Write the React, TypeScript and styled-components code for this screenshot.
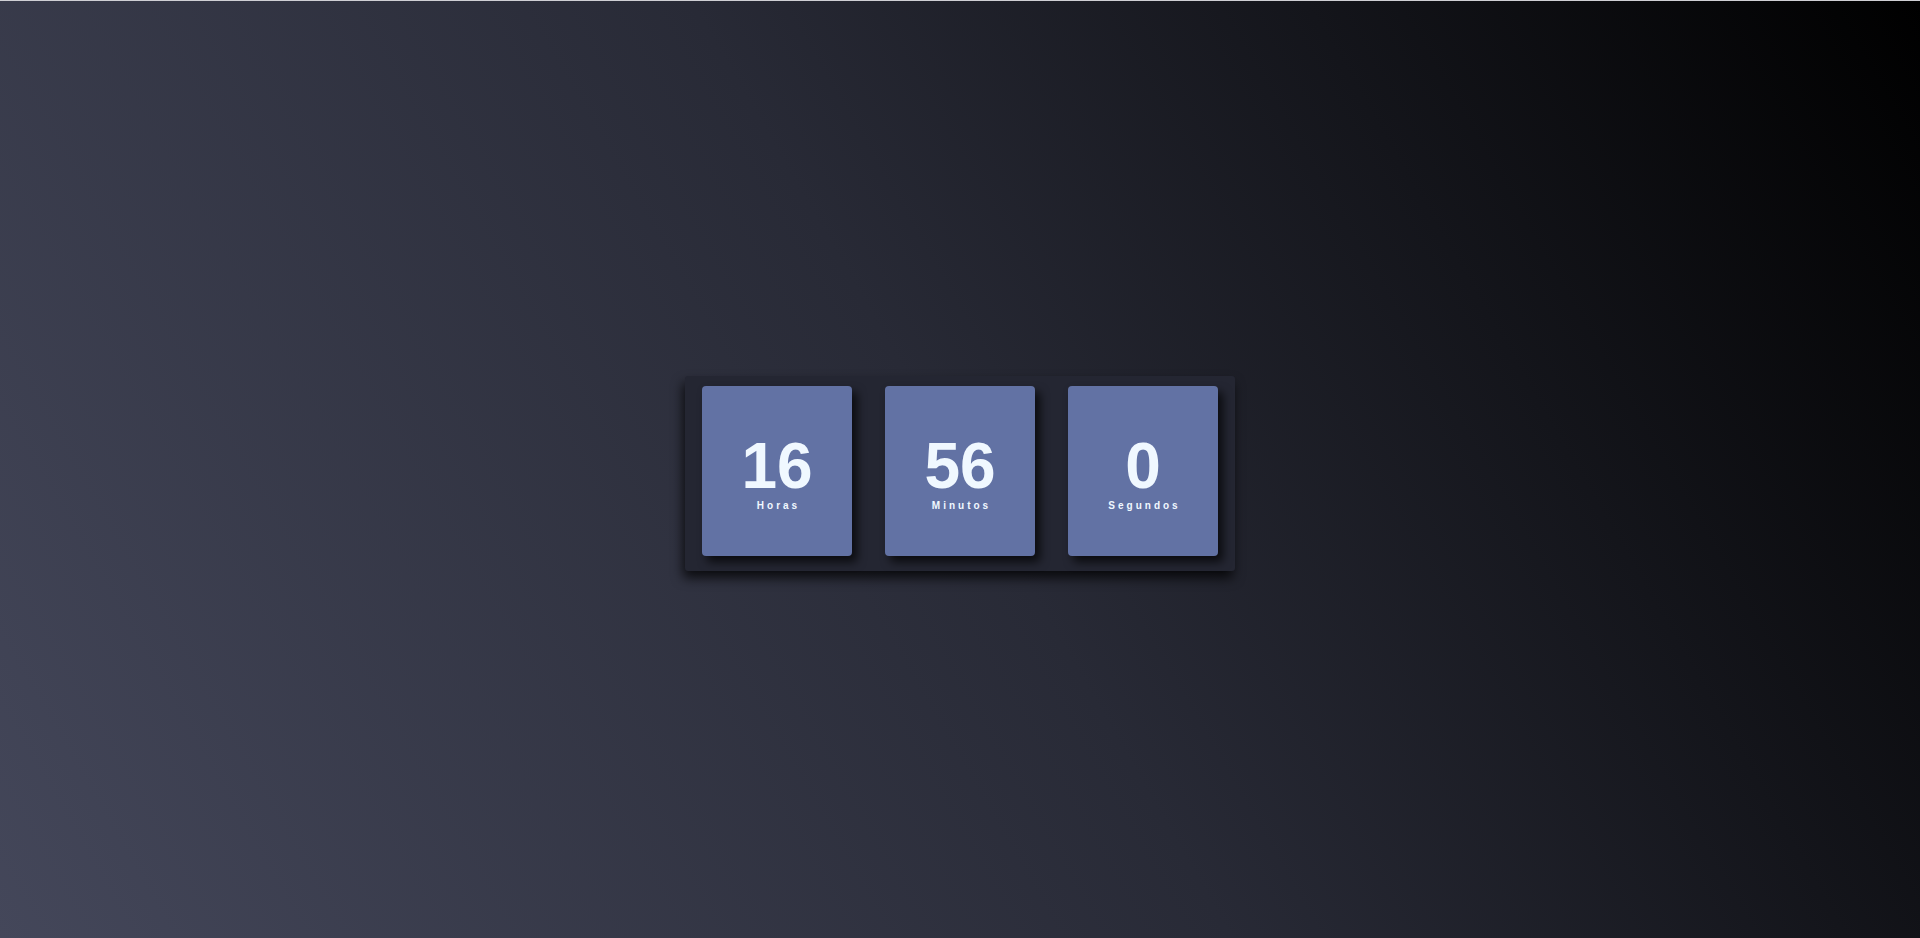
import React from "react";
import styled, { createGlobalStyle } from "styled-components";

const GlobalStyle = createGlobalStyle`
  html, body {
    margin: 0;
    padding: 0;
    background: #cfcfd4;
  }
  body {
    font-family: "Liberation Sans", Arial, sans-serif;
  }
`;

const Page = styled.main`
  box-sizing: border-box;
  margin-top: 1px;
  height: 937px;
  width: 100%;
  padding-top: 8px;
  display: flex;
  align-items: center;
  justify-content: center;
  background: linear-gradient(60deg, #44475a 0%, #282a36 50%, #000000 100%);
`;

const Clock = styled.section`
  box-sizing: border-box;
  width: 550px;
  height: 195px;
  padding: 10px 17px 15px;
  display: flex;
  justify-content: space-between;
  align-items: stretch;
  background: #242632;
  border-radius: 3px;
  box-shadow: -2px 7px 12px rgba(0, 0, 0, 0.75);
`;

const Card = styled.div`
  width: 150px;
  height: 170px;
  box-sizing: border-box;
  display: flex;
  flex-direction: column;
  align-items: center;
  justify-content: center;
  background: #6272a4;
  border-radius: 4px;
  box-shadow: 5px 6px 10px rgba(0, 0, 0, 0.7);
  color: #f0f8ff;
  padding-top: 8px;
`;

const Value = styled.span`
  font-size: 64px;
  font-weight: 700;
  line-height: 56px;
`;

const Label = styled.span`
  margin-top: 6px;
  font-size: 10px;
  font-weight: 700;
  letter-spacing: 3px;
  padding-left: 3px;
  line-height: 12px;
`;

const units = [
  { value: "16", label: "Horas" },
  { value: "56", label: "Minutos" },
  { value: "0", label: "Segundos" },
];

export default function App() {
  return (
    <>
      <GlobalStyle />
      <Page>
        <Clock>
          {units.map((u) => (
            <Card key={u.label}>
              <Value>{u.value}</Value>
              <Label>{u.label}</Label>
            </Card>
          ))}
        </Clock>
      </Page>
    </>
  );
}
